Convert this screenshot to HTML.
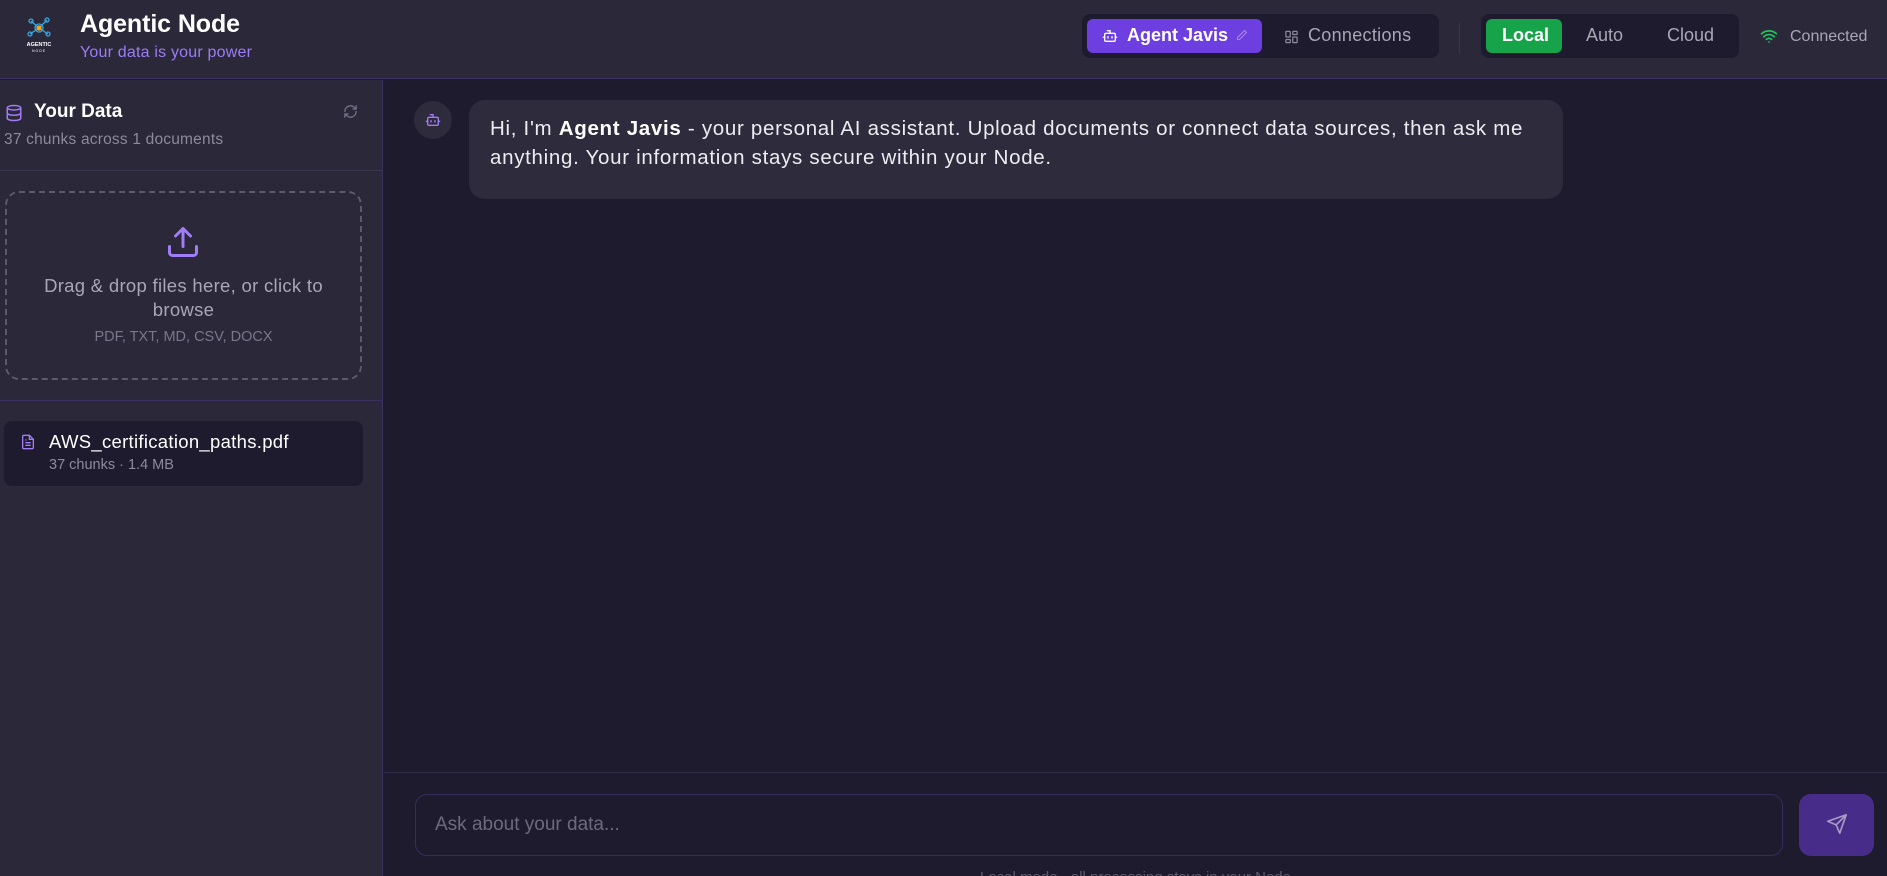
<!DOCTYPE html>
<html><head><meta charset="utf-8"><style>
*{box-sizing:border-box;margin:0;padding:0}
html,body{width:1887px;height:876px;overflow:hidden}
body{background:#1e1b2e;font-family:"Liberation Sans",sans-serif;color:#fff;position:relative}
.abs{position:absolute}
#hdr{left:0;top:0;width:1887px;height:79px;background:#2b2839;border-bottom:1px solid #3a3160}
#side{left:0;top:80px;width:383px;height:820px;background:#2b2839;border-right:1px solid #3a3160}
.t{white-space:nowrap}
</style></head><body>
<div id="hdr" class="abs"></div>
<svg class="abs" style="left:22px;top:14px" width="34" height="42" viewBox="0 0 34 42">
<g stroke="#3aa6e0" stroke-width="1.3" fill="none">
<line x1="17" y1="14" x2="9" y2="7"/><line x1="17" y1="14" x2="25" y2="6"/><line x1="17" y1="14" x2="8" y2="20"/><line x1="17" y1="14" x2="26" y2="20"/>
<circle cx="9" cy="7" r="2"/><circle cx="25" cy="6" r="2"/><circle cx="8" cy="20" r="2"/><circle cx="26" cy="20" r="2"/><circle cx="17" cy="14" r="4"/></g>
<circle cx="17" cy="14" r="2.6" fill="#f5a623"/>
<text x="17" y="32" font-size="5.5" font-weight="bold" fill="#fff" text-anchor="middle" font-family="Liberation Sans">AGENTIC</text>
<text x="17" y="38" font-size="3.5" fill="#fff" text-anchor="middle" font-family="Liberation Sans" letter-spacing="1">NODE</text>
</svg>
<div class="abs t" style="left:80px;top:10px;font-size:25px;font-weight:bold;letter-spacing:-0.1px">Agentic Node</div>
<div class="abs t" style="left:80px;top:44px;font-size:16px;color:#9b7cf5;letter-spacing:0.2px">Your data is your power</div>
<div class="abs" style="left:1082px;top:14px;width:357px;height:44px;background:#1e1b2e;border-radius:8px"></div>
<div class="abs" style="left:1087px;top:19px;width:175px;height:34px;background:#6d3fe0;border-radius:6px"></div>
<svg class="abs" style="left:1102px;top:28px" width="16" height="16" viewBox="0 0 24 24" fill="none" stroke="#fff" stroke-width="2" stroke-linecap="round"><path d="M12 8V4H8"/><rect x="4" y="8" width="16" height="12" rx="2"/><path d="M2 14h2M20 14h2M15 13v2M9 13v2"/></svg>
<div class="abs t" style="left:1127px;top:25px;font-size:18px;font-weight:bold">Agent Javis</div>
<svg class="abs" style="left:1236px;top:29px" width="12" height="12" viewBox="0 0 24 24" fill="none" stroke="#a98bf0" stroke-width="2"><path d="M17 3l4 4L7 21H3v-4z"/></svg>
<svg class="abs" style="left:1284px;top:29px" width="15" height="16" viewBox="0 0 24 24" fill="none" stroke="#8d8a9c" stroke-width="2"><rect x="3" y="3" width="7" height="9" rx="1"/><rect x="14" y="3" width="7" height="5" rx="1"/><rect x="14" y="12" width="7" height="9" rx="1"/><rect x="3" y="16" width="7" height="5" rx="1"/></svg>
<div class="abs t" style="left:1308px;top:25px;font-size:18px;color:#a9a6b6;letter-spacing:0.3px">Connections</div>
<div class="abs" style="left:1459px;top:23px;width:1px;height:30px;background:#3a3750"></div>
<div class="abs" style="left:1481px;top:14px;width:258px;height:44px;background:#1e1b2e;border-radius:8px"></div>
<div class="abs" style="left:1486px;top:19px;width:76px;height:34px;background:#16a34a;border-radius:6px"></div>
<div class="abs t" style="left:1502px;top:25px;font-size:18px;font-weight:bold">Local</div>
<div class="abs t" style="left:1586px;top:25px;font-size:18px;color:#a9a6b6">Auto</div>
<div class="abs t" style="left:1667px;top:25px;font-size:18px;color:#a9a6b6">Cloud</div>
<svg class="abs" style="left:1760px;top:27px" width="18" height="18" viewBox="0 0 24 24" fill="none" stroke="#22c55e" stroke-width="2.2" stroke-linecap="round"><path d="M2 9a15 15 0 0 1 20 0M5 13a10 10 0 0 1 14 0M8.5 16.5a5 5 0 0 1 7 0M12 20h.01"/></svg>
<div class="abs t" style="left:1790px;top:28px;font-size:16px;color:#a9a6b6">Connected</div>

<div id="side" class="abs"></div>
<svg class="abs" style="left:5px;top:103px" width="18" height="20" viewBox="0 0 24 24" fill="none" stroke="#a07cf5" stroke-width="2"><ellipse cx="12" cy="5" rx="9" ry="3"/><path d="M3 5v14c0 1.7 4 3 9 3s9-1.3 9-3V5M3 12c0 1.7 4 3 9 3s9-1.3 9-3"/></svg>
<div class="abs t" style="left:34px;top:101px;font-size:19px;font-weight:bold">Your Data</div>
<svg class="abs" style="left:343px;top:104px" width="15" height="15" viewBox="0 0 24 24" fill="none" stroke="#77748a" stroke-width="2" stroke-linecap="round"><path d="M3 12a9 9 0 0 1 15-6.7L21 8M21 3v5h-5M21 12a9 9 0 0 1-15 6.7L3 16M3 21v-5h5"/></svg>
<div class="abs t" style="left:4px;top:131px;font-size:15.5px;color:#8d8a9c;letter-spacing:0.2px">37 chunks across 1 documents</div>
<div class="abs" style="left:0;top:170px;width:383px;height:1px;background:#3a3650"></div>
<div class="abs" style="left:5px;top:191px;width:357px;height:189px;border:2px dashed #5d5a6e;border-radius:14px"></div>
<svg class="abs" style="left:165px;top:224px" width="36" height="36" viewBox="0 0 24 24" fill="none" stroke="#a07cf5" stroke-width="2" stroke-linecap="round" stroke-linejoin="round"><path d="M21 15v4a2 2 0 0 1-2 2H5a2 2 0 0 1-2-2v-4M17 8l-5-5-5 5M12 3v12"/></svg>
<div class="abs" style="left:5px;top:274px;width:357px;text-align:center;font-size:18.5px;line-height:24px;color:#a9a6b6;letter-spacing:0.3px">Drag &amp; drop files here, or click to<br>browse</div>
<div class="abs" style="left:5px;top:329px;width:357px;text-align:center;font-size:14.5px;color:#7a778b">PDF, TXT, MD, CSV, DOCX</div>
<div class="abs" style="left:0;top:400px;width:383px;height:1px;background:#3a3160"></div>
<div class="abs" style="left:4px;top:421px;width:359px;height:65px;background:#1e1b2e;border-radius:8px"></div>
<svg class="abs" style="left:20px;top:433px" width="16" height="18" viewBox="0 0 24 24" fill="none" stroke="#a07cf5" stroke-width="2"><path d="M14 2H6a2 2 0 0 0-2 2v16a2 2 0 0 0 2 2h12a2 2 0 0 0 2-2V8z"/><path d="M14 2v6h6M8 13h8M8 17h8M8 9h2"/></svg>
<div class="abs t" style="left:49px;top:431px;font-size:18.5px;letter-spacing:0.3px">AWS_certification_paths.pdf</div>
<div class="abs t" style="left:49px;top:457px;font-size:14.5px;color:#8d8a9c">37 chunks · 1.4 MB</div>

<div class="abs" style="left:414px;top:101px;width:38px;height:38px;border-radius:50%;background:#2e2b3d"></div>
<svg class="abs" style="left:425px;top:112px" width="16" height="16" viewBox="0 0 24 24" fill="none" stroke="#a07cf5" stroke-width="2" stroke-linecap="round"><path d="M12 8V4H8"/><rect x="4" y="8" width="16" height="12" rx="2"/><path d="M2 14h2M20 14h2M15 13v2M9 13v2"/></svg>
<div class="abs" style="left:469px;top:100px;width:1094px;height:99px;background:#2e2b3d;border-radius:16px"></div>
<div class="abs t" style="left:490px;top:115px;font-size:20.5px;line-height:28.5px;color:#ececf1;letter-spacing:0.7px">Hi, I'm <b style="color:#fff">Agent Javis</b> - your personal AI assistant. Upload documents or connect data sources, then ask me<br>anything. Your information stays secure within your Node.</div>

<div class="abs" style="left:384px;top:772px;width:1503px;height:1px;background:#2e2a48"></div>
<div class="abs" style="left:415px;top:794px;width:1368px;height:62px;border:1px solid #352d5e;border-radius:12px;background:#1e1b2e"></div>
<div class="abs t" style="left:435px;top:814px;font-size:19px;color:#6d6a7c">Ask about your data...</div>
<div class="abs" style="left:1799px;top:794px;width:75px;height:62px;background:#472c89;border-radius:12px"></div>
<svg class="abs" style="left:1826px;top:813px" width="22" height="22" viewBox="0 0 24 24" fill="none" stroke="#a59bc4" stroke-width="1.8" stroke-linejoin="round"><path d="M22 2L11 13M22 2l-7 20-4-9-9-4z"/></svg>
<div class="abs t" style="left:384px;top:869px;width:1503px;text-align:center;font-size:15px;color:#5d5a6e">Local mode - all processing stays in your Node</div>
</body></html>
